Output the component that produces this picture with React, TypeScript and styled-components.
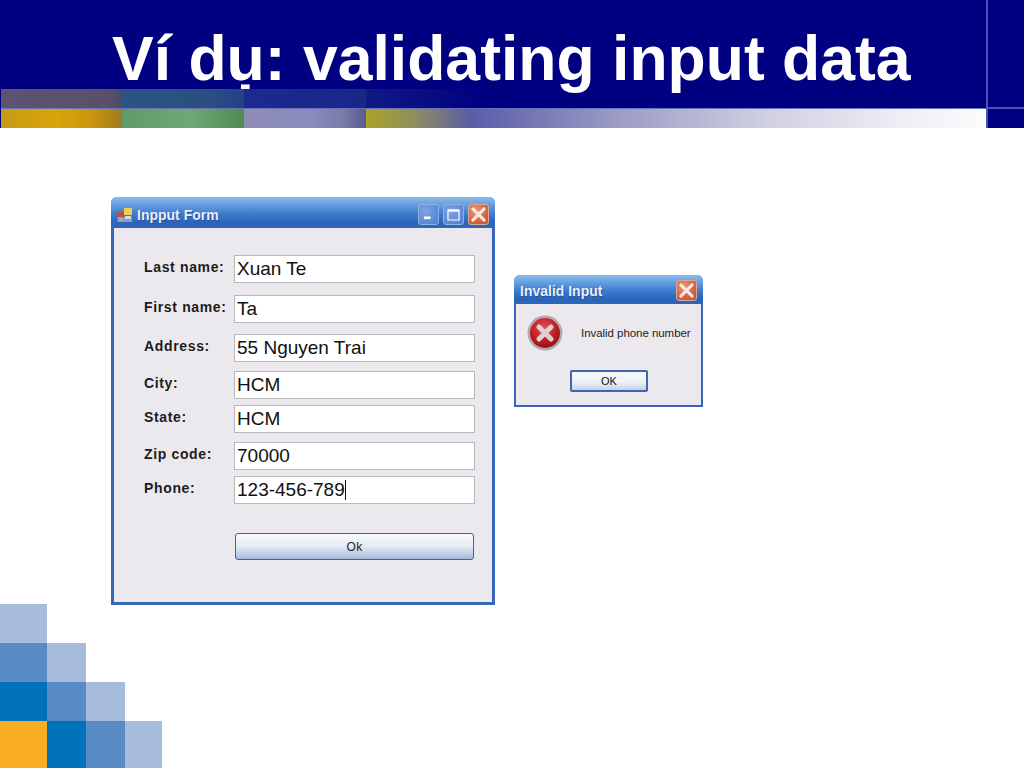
import React from 'react';
import styled, { createGlobalStyle } from 'styled-components';

const GlobalStyle = createGlobalStyle`
  html, body { margin: 0; padding: 0; background: #fff; }
  body { font-family: "Liberation Sans", Arial, sans-serif; }
`;

const Slide = styled.div`
  width: 1024px;
  height: 768px;
  overflow: hidden;
  display: flex;
  flex-direction: column;
  background: #fff;
`;

const Header = styled.header`
  height: 128px;
  display: flex;
  background: #000080;
  padding-left: 1px;
`;

const HeaderMain = styled.div`
  width: 985px;
  display: flex;
  flex-direction: column;
`;

const HeaderSide = styled.div`
  flex: 1;
  border-left: 2px solid #4652b4;
  display: flex;
  flex-direction: column;
`;

const SideTop = styled.div`
  height: 107px;
  border-bottom: 2px solid #4652b4;
`;

const Title = styled.h1`
  margin: 0;
  height: 89px;
  padding-left: 111px;
  font-size: 62.5px;
  line-height: 117px;
  font-weight: 700;
  color: #fff;
  white-space: nowrap;
`;

const UpperStrip = styled.div`
  height: 20px;
  display: flex;
`;

const UpperCell = styled.div<{ $w: number; $c: string }>`
  width: ${p => p.$w}px;
  background: ${p => p.$c};
`;

const LowerStrip = styled.div`
  height: 19px;
  display: flex;
  border-top: 1px solid #6a72bc;
  margin-top: -1px;
`;

const LowerCell = styled.div<{ $w: number; $c: string }>`
  width: ${p => p.$w}px;
  background: ${p => p.$c};
`;

const Content = styled.main`
  height: 476px;
  box-sizing: border-box;
  padding: 69px 0 0 111px;
  display: flex;
  align-items: flex-start;
  gap: 19px;
`;

const Win = styled.section<{ $w: number; $h: number; $mt?: number; $bw: number }>`
  width: ${p => p.$w}px;
  height: ${p => p.$h}px;
  margin-top: ${p => p.$mt ?? 0}px;
  box-sizing: border-box;
  display: flex;
  flex-direction: column;
  background: #3767b8;
  border-radius: 6px 6px 0 0;
  padding: 0 ${p => p.$bw}px ${p => p.$bw}px;
`;

const TitleBar = styled.div<{ $h: number; $bw: number; $pt: number }>`
  height: ${p => p.$h}px;
  box-sizing: border-box;
  margin: 0 -${p => p.$bw}px;
  padding: ${p => p.$pt}px 6px 0;
  display: flex;
  align-items: center;
  gap: 4px;
  border-radius: 6px 6px 0 0;
  background: linear-gradient(180deg, #8dbcec 0%, #6aa2e2 22%, #3f7ed0 52%, #2a65bc 82%, #2f66b8 100%);
`;

const TitleText = styled.span<{ $size: number }>`
  flex: 1;
  font-size: ${p => p.$size}px;
  font-weight: 700;
  color: #e8eef8;
  white-space: nowrap;
  text-shadow: 1px 1px 0 #2a5098;
`;

const Caption = styled.button<{ $kind: 'blue' | 'red' }>`
  width: 21px;
  height: 21px;
  padding: 0;
  display: flex;
  align-items: center;
  justify-content: center;
  border: 1px solid ${p => (p.$kind === 'red' ? '#d8a898' : '#8fb2e4')};
  border-radius: 3px;
  background: ${p => (p.$kind === 'red'
    ? 'radial-gradient(circle at 35% 30%, #e89878, #d8623e 60%, #c4502e)'
    : 'radial-gradient(circle at 35% 30%, #7ea4e2, #5f8ad6 65%, #527cc8)')};
`;

const WinBody = styled.div`
  flex: 1;
  min-height: 0;
  background: #ece9ee;
  display: flex;
  flex-direction: column;
`;

const FormBody = styled(WinBody)`
  padding: 27px 17px 0 30px;
`;

const Row = styled.div<{ $mb: number }>`
  display: flex;
  align-items: flex-start;
  height: 28px;
  margin-bottom: ${p => p.$mb}px;
`;

const Label = styled.label`
  width: 90px;
  flex: none;
  font-size: 14px;
  line-height: 16px;
  margin-top: 4px;
  font-weight: 700;
  letter-spacing: 0.65px;
  color: #1c1c1c;
  white-space: nowrap;
`;

const Field = styled.div`
  width: 241px;
  height: 28px;
  box-sizing: border-box;
  display: flex;
  align-items: center;
  padding: 0 0 0 2px;
  border: 1px solid #b8b8bc;
  background: #fff;
  font-size: 19px;
  color: #101010;
  white-space: nowrap;
`;

const Caret = styled.span`
  width: 1px;
  height: 20px;
  background: #111;
`;

const OkWide = styled.button`
  width: 239px;
  height: 27px;
  margin: 29px 0 0 91px;
  padding: 0;
  border: 1px solid #3d64a4;
  border-radius: 3px;
  background: linear-gradient(180deg, #f8fafd 0%, #e8eef6 45%, #b9c9e2 85%, #a4b8d8 100%);
  font-family: "Liberation Sans", Arial, sans-serif;
  font-size: 12px;
  letter-spacing: 0.4px;
  color: #222;
`;

const DialogBody = styled(WinBody)`
  padding: 11px 0 0 11px;
`;

const DialogRow = styled.div`
  display: flex;
  align-items: center;
  gap: 18px;
`;

const Message = styled.span`
  font-size: 11.5px;
  letter-spacing: -0.05px;
  color: #222;
  white-space: nowrap;
`;

const OkSmall = styled.button`
  width: 78px;
  height: 22px;
  margin: 19px 0 0 43px;
  padding: 0;
  border: 2px solid #3f68ac;
  border-radius: 2px;
  background: linear-gradient(180deg, #f6f8fc 0%, #eef2f8 55%, #c4d2e6 100%);
  font-family: "Liberation Sans", Arial, sans-serif;
  font-size: 11px;
  color: #111;
`;

const Corner = styled.div`
  width: 162px;
  height: 164px;
  display: grid;
  grid-template-columns: 47px 39px 39px 37px;
  grid-template-rows: 39px 39px 39px 47px;
`;

const Block = styled.div<{ $c?: string }>`
  background: ${p => p.$c ?? 'transparent'};
`;

const L = '#a7bcdd';
const M = '#5a8ac6';
const D = '#0073b8';
const O = '#fbad21';

const corner = [
  L, '', '', '',
  M, L, '', '',
  D, M, L, '',
  O, D, M, L,
];

const rows: { label: string; value: string; mb: number; caret?: boolean }[] = [
  { label: 'Last name:', value: 'Xuan Te', mb: 12 },
  { label: 'First name:', value: 'Ta', mb: 11 },
  { label: 'Address:', value: '55 Nguyen Trai', mb: 9 },
  { label: 'City:', value: 'HCM', mb: 6 },
  { label: 'State:', value: 'HCM', mb: 9 },
  { label: 'Zip code:', value: '70000', mb: 6 },
  { label: 'Phone:', value: '123-456-789', mb: 0, caret: true },
];

const upper = [
  { w: 121, c: 'linear-gradient(90deg, #5c5470, #5a5068 90%, #4a4a6c)' },
  { w: 122, c: 'linear-gradient(90deg, #2c5482, #2a4f80 70%, #24408a)' },
  { w: 122, c: 'linear-gradient(90deg, #1c2a8e, #1a2688)' },
  { w: 120, c: 'linear-gradient(90deg, #101a84, #000080)' },
];

const lower = [
  { w: 121, c: 'linear-gradient(90deg, #c79a14 0%, #d8a50c 45%, #c9960f 75%, #a07a20 100%)' },
  { w: 122, c: 'linear-gradient(90deg, #5f9a68 0%, #6fa878 55%, #4f8a50 100%)' },
  { w: 122, c: 'linear-gradient(90deg, #8d8db4 0%, #8a8ac0 55%, #7c7ca8 80%, #585c90 100%)' },
  { w: 620, c: 'linear-gradient(90deg, #aaa428 0%, #8e8c60 8%, #5a5ca8 17%, #9a9ac4 40%, #d0d0e2 65%, #f0f0f6 88%, #fbfbfc 100%)' },
];

const AppIcon = () => (
  <svg width="16" height="16" viewBox="0 0 16 16" aria-hidden="true">
    <rect x="0.5" y="5" width="6.5" height="5" fill="#c8483a" />
    <rect x="7" y="1" width="8" height="7" fill="#f0d050" />
    <rect x="0.5" y="10" width="14.5" height="5" fill="#8e9cc4" />
    <rect x="2.5" y="11.5" width="3" height="2" fill="#c8a8a8" />
    <rect x="8" y="9" width="6" height="3" fill="#d8d8e8" />
  </svg>
);

const CrossGlyph = ({ size }: { size: number }) => (
  <svg width={size} height={size} viewBox="0 0 12 12" aria-hidden="true">
    <path d="M1.5 1.5 L10.5 10.5 M10.5 1.5 L1.5 10.5" stroke="#f6e8e2" strokeWidth="2.4" strokeLinecap="round" />
  </svg>
);

const ErrorIcon = () => (
  <svg width="36" height="36" viewBox="0 0 36 36" aria-hidden="true">
    <defs>
      <radialGradient id="err" cx="45%" cy="32%" r="72%">
        <stop offset="0%" stopColor="#dc5058" />
        <stop offset="55%" stopColor="#c42028" />
        <stop offset="100%" stopColor="#8c1016" />
      </radialGradient>
    </defs>
    <circle cx="18" cy="18" r="17.5" fill="#b4a8ac" />
    <circle cx="18" cy="18" r="15" fill="url(#err)" />
    <path d="M12 12 L24 24 M24 12 L12 24" stroke="#ddd0d2" strokeWidth="5" strokeLinecap="round" />
  </svg>
);

export default function App() {
  return (
    <Slide>
      <GlobalStyle />
      <Header>
        <HeaderMain>
          <Title>Ví dụ: validating input data</Title>
          <UpperStrip>
            {upper.map((u, i) => <UpperCell key={i} $w={u.w} $c={u.c} />)}
          </UpperStrip>
          <LowerStrip>
            {lower.map((u, i) => <LowerCell key={i} $w={u.w} $c={u.c} />)}
          </LowerStrip>
        </HeaderMain>
        <HeaderSide>
          <SideTop />
        </HeaderSide>
      </Header>

      <Content>
        <Win $w={384} $h={408} $bw={3}>
          <TitleBar $h={31} $bw={3} $pt={4}>
            <AppIcon />
            <TitleText $size={14}>Inpput Form</TitleText>
            <Caption $kind="blue">
              <svg width="13" height="13" viewBox="0 0 13 13" aria-hidden="true">
                <rect x="2" y="8.5" width="6.5" height="2.6" fill="#fff" />
              </svg>
            </Caption>
            <Caption $kind="blue">
              <svg width="15" height="15" viewBox="0 0 15 15" aria-hidden="true">
                <path d="M2 3 H13 V13 H2 Z" fill="none" stroke="#fff" strokeWidth="1.2" />
                <rect x="2" y="2.5" width="11" height="2.2" fill="#fff" />
              </svg>
            </Caption>
            <Caption $kind="red">
              <CrossGlyph size={15} />
            </Caption>
          </TitleBar>
          <FormBody>
            {rows.map(r => (
              <Row key={r.label} $mb={r.mb}>
                <Label>{r.label}</Label>
                <Field>
                  {r.value}
                  {r.caret && <Caret />}
                </Field>
              </Row>
            ))}
            <OkWide>Ok</OkWide>
          </FormBody>
        </Win>

        <Win $w={189} $h={132} $mt={78} $bw={2}>
          <TitleBar $h={29} $bw={2} $pt={2}>
            <TitleText $size={14}>Invalid Input</TitleText>
            <Caption $kind="red">
              <CrossGlyph size={15} />
            </Caption>
          </TitleBar>
          <DialogBody>
            <DialogRow>
              <ErrorIcon />
              <Message>Invalid phone number</Message>
            </DialogRow>
            <OkSmall>OK</OkSmall>
          </DialogBody>
        </Win>
      </Content>

      <Corner>
        {corner.map((c, i) => <Block key={i} $c={c || undefined} />)}
      </Corner>
    </Slide>
  );
}
